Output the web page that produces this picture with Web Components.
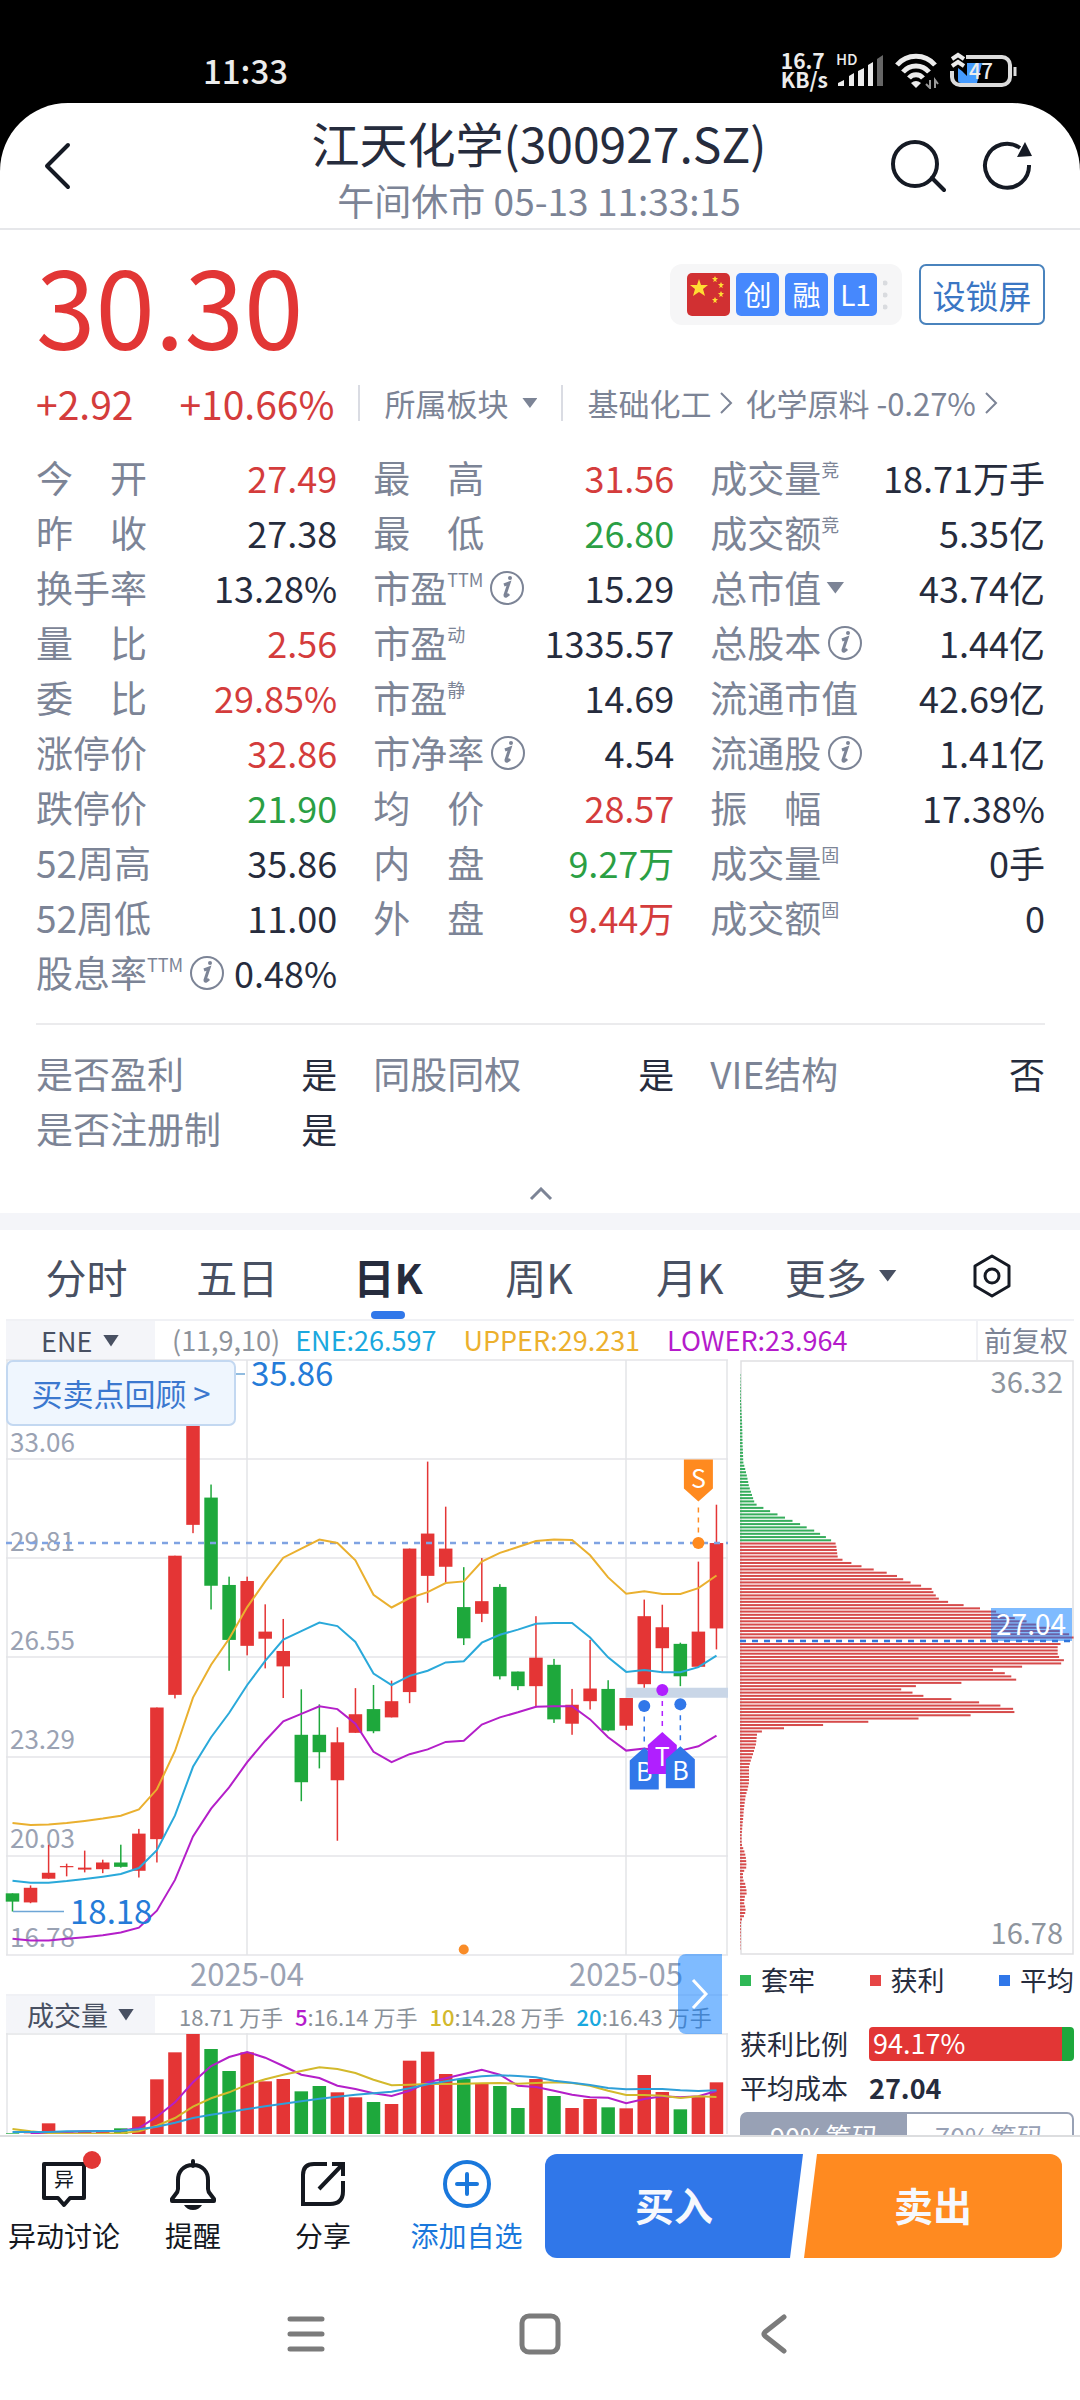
<!DOCTYPE html>
<html lang="zh-CN">
<head>
<meta charset="utf-8">
<meta name="viewport" content="width=device-width, initial-scale=1">
<title>江天化学(300927.SZ)</title>
<style>
  body {
    margin: 0;
    height: 100vh;
    display: flex;
    flex-direction: column;
    overflow: hidden;
    background: #000;
    color: #262c3d;
    font-family: "Noto Sans CJK SC", sans-serif;
    --muted: #7c8496;
    --up: #e23635;
    --down: #1ea83c;
    --blue: #3077e9;
    --panel: #f4f5f9;
    --line: #e6e7ea;
  }

  main {
    flex: 1;
    min-height: 0;
    overflow: hidden;
    background: #fff;
    border-radius: 68px 68px 0 0;
  }
</style>
</head>
<body>
<status-bar></status-bar>
<main>
  <stock-header>
    <span slot="title">江天化学(300927.SZ)</span>
    <span slot="state">午间休市 05-13 11:33:15</span>
  </stock-header>

  <quote-summary>
    <span slot="price">30.30</span>
    <span slot="change">+2.92</span>
    <span slot="percent">+10.66%</span>
  </quote-summary>

  <quote-grid>
    <quote-item value="27.49" tone="up">今　开</quote-item>
    <quote-item value="31.56" tone="up">最　高</quote-item>
    <quote-item value="18.71万手" mark="竞">成交量</quote-item>
    <quote-item value="27.38">昨　收</quote-item>
    <quote-item value="26.80" tone="down">最　低</quote-item>
    <quote-item value="5.35亿" mark="竞">成交额</quote-item>
    <quote-item value="13.28%">换手率</quote-item>
    <quote-item value="15.29" mark="TTM" info>市盈</quote-item>
    <quote-item value="43.74亿" more>总市值</quote-item>
    <quote-item value="2.56" tone="up">量　比</quote-item>
    <quote-item value="1335.57" mark="动">市盈</quote-item>
    <quote-item value="1.44亿" info>总股本</quote-item>
    <quote-item value="29.85%" tone="up">委　比</quote-item>
    <quote-item value="14.69" mark="静">市盈</quote-item>
    <quote-item value="42.69亿">流通市值</quote-item>
    <quote-item value="32.86" tone="up">涨停价</quote-item>
    <quote-item value="4.54" info>市净率</quote-item>
    <quote-item value="1.41亿" info>流通股</quote-item>
    <quote-item value="21.90" tone="down">跌停价</quote-item>
    <quote-item value="28.57" tone="up">均　价</quote-item>
    <quote-item value="17.38%">振　幅</quote-item>
    <quote-item value="35.86">52周高</quote-item>
    <quote-item value="9.27万" tone="down">内　盘</quote-item>
    <quote-item value="0手" mark="固">成交量</quote-item>
    <quote-item value="11.00">52周低</quote-item>
    <quote-item value="9.44万" tone="up">外　盘</quote-item>
    <quote-item value="0" mark="固">成交额</quote-item>
    <quote-item value="0.48%" mark="TTM" info>股息率</quote-item>

    <quote-item slot="extra" value="是">是否盈利</quote-item>
    <quote-item slot="extra" value="是">同股同权</quote-item>
    <quote-item slot="extra" value="否">VIE结构</quote-item>
    <quote-item slot="extra" value="是">是否注册制</quote-item>
  </quote-grid>

  <period-tabs active="日K"></period-tabs>
  <indicator-bar></indicator-bar>

  <chart-layout>
    <kline-chart></kline-chart>
    <volume-chart></volume-chart>
    <chip-panel slot="side"></chip-panel>
  </chart-layout>
</main>
<trade-bar></trade-bar>
<nav-bar></nav-bar>

<script>
// Styles shared by every element
const base = `
  * { box-sizing: border-box; }
  :host { display: block; }
  button, select {
    font: inherit; color: inherit; background: none; border: 0;
    padding: 0; margin: 0; cursor: pointer; white-space: nowrap;
  }
  a { color: inherit; text-decoration: none; }
  svg { display: block; }
  .tri {
    display: inline-block; width: 18px; height: 12px; flex: none;
    background: currentColor; clip-path: polygon(0 0, 100% 0, 50% 100%);
  }
`;

class BaseElement extends HTMLElement {
  constructor() {
    super();
    this.attachShadow({ mode: 'open' });
  }

  connectedCallback() {
    this.shadowRoot.innerHTML = `<style>${base}${this.styles()}</style>${this.markup()}`;
  }

  styles() { return ''; }
  markup() { return ''; }
}

class StatusBar extends BaseElement {
  styles() {
    return `
      :host { height: 103px; flex: none; color: #ececec; background: #000; }
      .row {
        display: flex; align-items: center; justify-content: space-between;
        padding: 36px 62px 0 203px;
      }
      .time { font-size: 33px; line-height: 68px; font-weight: 500; }
      .right { display: flex; align-items: center; gap: 8px; }
      .speed { font-size: 21px; line-height: 19px; font-weight: 700; }
      .speed span { display: block; }
      text { fill: #ececec; font-weight: 500; }
    `;
  }

  markup() {
    return `
      <div class="row">
        <span class="time">11:33</span>
        <div class="right">
          <div class="speed"><span>16.7</span><span>KB/s</span></div>
          <svg width="48" height="38" viewBox="0 0 48 38" fill="#ececec">
            <text x="0" y="14" font-size="15">HD</text>
            <path d="M2 35v-3l6-3v6zM13 35V25l5-3v13zM22 35V20l6-3v18zM32 35V14l5-3v24z"/>
            <path d="M41 35V8l6-4v31z" fill="#666"/>
          </svg>
          <svg width="50" height="38" viewBox="0 0 50 38" fill="none" stroke="#ececec" stroke-width="5">
            <path d="M5 14a25 25 0 0 1 38 0M11 21a17 17 0 0 1 26 0M17 27a9 9 0 0 1 14 0"/>
            <path d="M19 32q5-4 10 0l-5 5z" fill="#ececec" stroke="none"/>
            <path d="M38 29v8l-4-4M43 37v-8l3 4" stroke="#999" stroke-width="2"/>
          </svg>
          <svg width="68" height="38" viewBox="0 0 68 38" fill="none">
            <path d="M8 17v12q0 3 3 3h16l5-20H17v13l-5-5z" fill="#459bff"/>
            <path d="M16 6h36a8 8 0 0 1 8 8v12a8 8 0 0 1-8 8H10a8 8 0 0 1-8-8v-6" stroke="#dcdcdc" stroke-width="4"/>
            <path d="M2 8l6-4 6 4M2 15l6-4 6 4" stroke="#ececec" stroke-width="4"/>
            <path d="M65 16v9" stroke="#dcdcdc" stroke-width="3"/>
            <text x="19" y="28" font-size="21">47</text>
          </svg>
        </div>
      </div>
    `;
  }
}

class StockHeader extends BaseElement {
  styles() {
    return `
      header {
        display: grid; grid-template-columns: 1fr auto 1fr; align-items: center;
        padding: 0 46px 0 36px; border-bottom: 2px solid var(--line); color: #151a24;
      }
      .titles { padding-top: 10px; text-align: center; line-height: 58px; height: 125px; margin-left: 8px; }
      h1 { margin: 0; font-size: 48px; font-weight: 400; line-height: 58px; color: #262c3d; }
      p { margin: 0; font-size: 37px; color: var(--muted); }
      .tools { display: flex; justify-content: flex-end; gap: 36px; }
    `;
  }

  markup() {
    return `
      <header>
        <button aria-label="返回" style="justify-self:start">
          <svg width="44" height="52" viewBox="0 0 44 52" fill="none" stroke="currentColor" stroke-width="4" stroke-linecap="round" stroke-linejoin="round"><path d="M32 5 11 26l21 21"/></svg>
        </button>
        <div class="titles">
          <h1><slot name="title"></slot></h1>
          <p><slot name="state"></slot></p>
        </div>
        <div class="tools">
          <button aria-label="搜索">
            <svg width="56" height="56" viewBox="0 0 56 56" fill="none" stroke="currentColor" stroke-width="4" stroke-linecap="round"><circle cx="25" cy="26" r="22"/><path d="m42 40 12 12"/></svg>
          </button>
          <button aria-label="刷新">
            <svg width="52" height="56" viewBox="0 0 52 56" fill="none" stroke="currentColor" stroke-width="4"><path d="M47 27a22 22 0 1 1-9-17"/><path d="m43 4 7 14-15 1z" fill="currentColor" stroke="none"/></svg>
          </button>
        </div>
      </header>
    `;
  }
}

class QuoteSummary extends BaseElement {
  styles() {
    return `
      :host { padding: 34px 35px 0 36px; }
      .top, .badges, .change { display: flex; align-items: center; }
      .top { align-items: flex-start; gap: 17px; }
      .price { flex: 1; font-size: 107px; line-height: 80px; color: var(--up); }
      ::slotted([slot="price"]) { display: block; }
      .badges { height: 61px; padding: 0 14px 0 17px; gap: 6px; border-radius: 12px; background: #f6f6f7; }
      .badge {
        width: 43px; height: 43px; border-radius: 5px; background: #4688fd;
        color: #fff; font-size: 28px; line-height: 42px; text-align: center;
      }
      .flag { background: #d13032; }
      .lock {
        width: 126px; height: 61px; border: 2px solid #4a83bd; border-radius: 7px;
        color: #3a76c4; font-size: 33px; line-height: 54px;
      }
      .change { margin-top: 41px; height: 36px; line-height: 36px; font-size: 31px; color: var(--muted); white-space: nowrap; }
      .diff { font-size: 39px; color: #d43c3c; }
      .percent { margin-left: 46px; }
      i.bar { width: 2px; height: 36px; margin: 0 24px; background: #dadce3; }
      .sector { display: flex; align-items: center; gap: 14px; }
      .sector .tri { width: 15px; height: 10px; }
      a { display: flex; align-items: center; gap: 8px; margin-right: 12px; }
    `;
  }

  markup() {
    const arrow = '<svg width="14" height="26" viewBox="0 0 14 26" fill="none" stroke="currentColor" stroke-width="2"><path d="m2 3 10 10L2 23"/></svg>';
    return `
      <div class="top">
        <div class="price"><slot name="price"></slot></div>
        <div class="badges">
          <svg class="badge flag" viewBox="0 0 43 43" fill="#fd3">
            <path d="m12 6 2 6h7l-5 4 2 7-6-4-6 4 2-7-5-4h7z"/>
            <path d="m28 3 1 2h2l-2 2 1 2-2-1-2 1 1-2-2-2h2zM34 9l1 2h2l-2 2 1 2-2-1-2 1 1-2-2-2h2zM34 18l1 2h2l-2 2 1 2-2-1-2 1 1-2-2-2h2zM28 24l1 2h2l-2 2 1 2-2-1-2 1 1-2-2-2h2z"/>
          </svg>
          <span class="badge">创</span>
          <span class="badge">融</span>
          <span class="badge">L1</span>
          <svg width="5" height="36" viewBox="0 0 5 36" fill="#d9dbdf"><circle cx="2" cy="6" r="2.5"/><circle cx="2" cy="18" r="2.5"/><circle cx="2" cy="30" r="2.5"/></svg>
        </div>
        <button class="lock">设锁屏</button>
      </div>
      <div class="change">
        <span class="diff"><slot name="change"></slot></span>
        <span class="diff percent"><slot name="percent"></slot></span>
        <i class="bar"></i>
        <button class="sector">所属板块<i class="tri"></i></button>
        <i class="bar"></i>
        <a href="#industry">基础化工${arrow}</a>
        <a href="#material">化学原料 -0.27%${arrow}</a>
      </div>
    `;
  }
}

class QuoteGrid extends BaseElement {
  styles() {
    return `
      :host { padding: 29px 35px 0 36px; }
      .grid { display: grid; grid-template-columns: 9fr 9fr 10fr; grid-auto-rows: 55px; column-gap: 36px; }
      .extra { margin-top: 23px; padding-top: 21px; border-top: 2px solid #ebebed; }
      .fold { display: flex; width: 100%; height: 57px; padding-top: 31px; justify-content: center; color: var(--muted); }
      .band { height: 17px; margin: 0 -36px; background: var(--panel); }
    `;
  }

  markup() {
    return `
      <div class="grid"><slot></slot></div>
      <div class="grid extra"><slot name="extra"></slot></div>
      <button class="fold" aria-label="收起">
        <svg width="24" height="14" viewBox="0 0 24 14" fill="none" stroke="currentColor" stroke-width="3"><path d="m2 12 10-10 10 10"/></svg>
      </button>
      <div class="band"></div>
    `;
  }
}

class QuoteItem extends BaseElement {
  styles() {
    const tones = { up: '#d43c3c', down: '#2b9f44' };
    const color = tones[this.getAttribute('tone')] || '#262c3d';
    return `
      :host {
        display: flex; justify-content: space-between; align-items: center;
        font-size: 37px; line-height: 55px; white-space: nowrap; min-width: 0;
      }
      .label { display: flex; align-items: center; color: var(--muted); }
      .mark { align-self: flex-start; font-size: 18px; line-height: 38px; }
      .info { margin-left: 6px; }
      .tri { margin-left: 5px; }
      .value { color: ${color}; font-size: 36px; }
    `;
  }

  markup() {
    const mark = this.getAttribute('mark');
    return `
      <span class="label">
        <slot></slot>
        ${mark ? `<span class="mark">${mark}</span>` : ''}
        ${this.hasAttribute('info') ? `
          <svg class="info" width="36" height="36" viewBox="0 0 36 36" fill="none" stroke="currentColor" stroke-width="2">
            <circle cx="18" cy="18" r="16"/>
            <path d="M15 15l5-2-4 12q0 3 4-1" stroke-width="3"/><circle cx="21" cy="8" r="2" fill="currentColor" stroke="none"/>
          </svg>` : ''}
        ${this.hasAttribute('more') ? '<i class="tri"></i>' : ''}
      </span>
      <span class="value">${this.getAttribute('value')}</span>
    `;
  }
}

class PeriodTabs extends BaseElement {
  styles() {
    return `
      nav { display: grid; grid-template-columns: repeat(7, 1fr); height: 89px; padding: 0 13px 0 11px; }
      button {
        position: relative; display: flex; align-items: center; justify-content: center; gap: 12px;
        padding-top: 2px; font-size: 41px; color: #485062;
      }
      .active { font-weight: 700; color: #262c3d; }
      .active::after {
        content: ""; position: absolute; bottom: 0; left: calc(50% - 17px);
        width: 34px; height: 8px; border-radius: 4px; background: var(--blue);
      }
    `;
  }

  markup() {
    const active = this.getAttribute('active');
    const tabs = ['分时', '五日', '日K', '周K', '月K'];
    return `
      <nav>
        ${tabs.map(t => `<button class="${t === active ? 'active' : ''}">${t}</button>`).join('')}
        <button>更多<i class="tri"></i></button>
        <button aria-label="设置">
          <svg width="42" height="46" viewBox="0 0 42 46" fill="none" stroke="#151a24" stroke-width="3" stroke-linejoin="round">
            <path d="M21 3 38 13v20L21 43 4 33V13z"/><circle cx="21" cy="23" r="7"/>
          </svg>
        </button>
      </nav>
    `;
  }
}

// Grey drop-down that opens both the indicator and the volume row
const pickerStyles = `
  .picker { position: relative; display: flex; align-items: center; width: 149px; background: var(--panel); color: #485062; }
  .picker select { appearance: none; width: 100%; height: 100%; font-size: 27px; line-height: 38px; outline: 0; }
  .picker .tri { position: absolute; width: 16px; pointer-events: none; }
`;

class IndicatorBar extends BaseElement {
  styles() {
    return `${pickerStyles}
      .bar {
        display: flex; height: 41px; margin: 0 6px; border-top: 2px solid #f0f1f5;
        font-size: 27px; line-height: 37px; white-space: nowrap;
      }
      .picker select { padding-left: 35px; }
      .picker .tri { left: 97px; }
      .params { padding: 0 15px 0 17px; color: #8e939b; }
      .values { flex: 1; display: flex; gap: 27px; }
      .adjust { padding: 0 6px; border-left: 2px solid #f0f1f5; font-size: 28px; color: var(--muted); }
    `;
  }

  markup() {
    return `
      <div class="bar">
        <label class="picker"><select aria-label="主图指标"><option>ENE</option></select><i class="tri"></i></label>
        <span class="params">(11,9,10)</span>
        <div class="values">
          <span style="color:#1ba8de">ENE:26.597</span>
          <span style="color:#ecb02d">UPPER:29.231</span>
          <span style="color:#b51bcb">LOWER:23.964</span>
        </div>
        <button class="adjust">前复权</button>
      </div>
    `;
  }
}

class ChartLayout extends BaseElement {
  styles() {
    return `
      :host { display: grid; grid-template-columns: 722fr 334fr; gap: 12px; padding: 0 6px; align-items: start; }
    `;
  }

  markup() {
    return '<div><slot></slot></div><slot name="side"></slot>';
  }
}

const COUNT = 40;
const STEP = 18.05;
const barX = i => 6.5 + i * STEP;
const levelToY = level => (level - 26) * 595 / 1505;
const polyline = (values, toY, color) => {
  const points = values.slice(0, COUNT)
    .map((v, i) => v === null ? '' : `${barX(i).toFixed(1)},${toY(v).toFixed(1)}`).join(' ');
  return `<polyline points="${points}" fill="none" stroke="${color}" stroke-width="2"/>`;
};
const toneColor = tone => tone === 'g' ? '#1ea83c' : '#e43535';

// tone, body top, body bottom, high, low
const candles = [
  ['g', 1375, 1396, 1375, 1421], ['r', 1361, 1398, 1355, 1400], ['r', 1323, 1338, 1252, 1338], ['r', 1306, 1309, 1300, 1332],
  ['r', 1310, 1315, 1267, 1322], ['r', 1297, 1314, 1290, 1324], ['g', 1297, 1308, 1252, 1310], ['r', 1224, 1318, 1212, 1335],
  ['r', 905, 1238, 905, 1297], ['r', 521, 873, 521, 882], ['r', 140, 443, 60, 464], ['g', 374, 597, 341, 657],
  ['g', 595, 734, 574, 812], ['r', 585, 749, 574, 773], ['r', 713, 731, 644, 806], ['r', 762, 801, 681, 881],
  ['g', 974, 1094, 859, 1142], ['g', 974, 1018, 897, 1059], ['r', 993, 1089, 955, 1242], ['r', 922, 969, 856, 969],
  ['g', 909, 965, 848, 970], ['r', 889, 930, 837, 930], ['r', 503, 866, 503, 894], ['r', 465, 572, 283, 640],
  ['r', 503, 549, 397, 590], ['g', 651, 730, 550, 747], ['r', 636, 668, 527, 689], ['g', 600, 826, 593, 834],
  ['g', 814, 851, 814, 861], ['r', 779, 851, 674, 905], ['g', 797, 935, 782, 944], ['r', 898, 946, 858, 974],
  ['r', 857, 889, 734, 910], ['g', 858, 963, 836, 965], ['r', 881, 951, 881, 962], ['r', 674, 846, 632, 855],
  ['r', 702, 755, 645, 815], ['g', 744, 826, 741, 851], ['r', 713, 802, 536, 802], ['r', 489, 705, 392, 758]
];

const upper = [1197, 1202, 1201, 1197, 1192, 1186, 1179, 1163, 1112, 1015, 880, 797, 731, 651, 586, 526, 503, 480, 489, 533,
  620, 652, 628, 613, 590, 586, 536, 514, 499, 484, 480, 481, 520, 576, 617, 611, 618, 618, 603, 571];
const middle = [1343, 1348, 1348, 1344, 1339, 1333, 1326, 1311, 1266, 1178, 1055, 980, 919, 848, 787, 733, 712, 690, 699, 739,
  819, 848, 825, 812, 791, 788, 741, 721, 708, 693, 691, 691, 728, 778, 815, 810, 816, 816, 803, 774];
const lower = [1490, 1494, 1494, 1490, 1486, 1481, 1474, 1462, 1419, 1341, 1231, 1161, 1107, 1043, 989, 940, 921, 902, 909, 946,
  1017, 1043, 1023, 1011, 992, 989, 948, 930, 917, 903, 902, 902, 935, 980, 1014, 1009, 1016, 1014, 1003, 976];

class KlineChart extends BaseElement {
  styles() {
    return `
      :host { position: relative; }
      svg { width: 100%; height: auto; overflow: visible; }
      .axis text { font-size: 26px; fill: #9aa2b3; }
      .peak { font-size: 33px; fill: #247bd8; }
      .date { font-size: 31px; fill: #9aa2b3; text-anchor: middle; }
      .flag text { font-size: 25px; fill: #fff; text-anchor: middle; }
      .review {
        position: absolute; top: 0; left: 0; width: 230px; height: 66px; text-align: center;
        border: 2px solid #c3d8f1; border-radius: 7px; background: #eff6fe;
        color: #3b78cf; font-size: 31px; line-height: 60px;
      }
    `;
  }

  candle([tone, top, bottom, high, low], i) {
    const x = barX(i);
    const y = levelToY(top);
    return `<g fill="${toneColor(tone)}">
      <rect x="${x - 0.75}" y="${levelToY(high)}" width="1.5" height="${levelToY(low) - levelToY(high)}"/>
      <rect x="${x - 6.75}" y="${y}" width="13.5" height="${levelToY(bottom) - y}"/>
    </g>`;
  }

  // A trade flag tied to its dot by a dashed stem
  flag(letter, i, tip, dot, color, down) {
    const x = barX(i);
    const y = levelToY(tip);
    const d = levelToY(dot);
    const s = down ? -1 : 1;
    return `<g class="flag" fill="${color}">
      <path d="M${x} ${y - s * 6}V${d}" stroke="${color}" stroke-width="1.5" stroke-dasharray="5 5"/>
      <circle cx="${x}" cy="${d}" r="6"/>
      <path d="M${x} ${y}l14.5 ${s * 13}v${s * 29}h-29v${-s * 29}z"/>
      <text x="${x}" y="${down ? y - 14 : y + 34}">${letter}</text>
    </g>`;
  }

  markup() {
    const prices = ['33.06', '29.81', '26.55', '23.29', '20.03', '16.78'];
    const rows = [0, 99, 198, 297, 397, 496, 595];
    return `
      <svg viewBox="0 0 722 634">
        <g stroke="#e4e5e8" stroke-width="1.5" fill="none">
          ${rows.map(y => `<path d="M0 ${y}H722"/>`).join('')}
          <path d="M1 0V595M241 0V595M620 0V595M721 0V595"/>
        </g>
        <rect x="620" y="${levelToY(855)}" width="102" height="10" fill="#c9d6e7"/>
        <g class="axis">
          ${prices.map((p, i) => `<text x="4" y="${(i + 1) * 99 - 7}">${p}</text>`).join('')}
        </g>
        ${candles.map((c, i) => this.candle(c, i)).join('')}
        <path d="M0 ${levelToY(489)}H722" stroke="#7fa3e2" stroke-width="2.5" stroke-dasharray="6 6"/>
        ${polyline(upper, levelToY, '#eab02f')}
        ${polyline(middle, levelToY, '#2aa9da')}
        ${polyline(lower, levelToY, '#b41fc9')}
        <path d="M229 14H239M7 ${levelToY(1421)}H58" stroke="#6ea6d6" stroke-width="1.5"/>
        <text class="peak" x="245" y="26">35.86</text>
        <text class="peak" x="64" y="564">18.18</text>
        ${this.flag('B', 35, 1006, 901, '#3177e9')}
        ${this.flag('T', 36, 967, 861, '#b01fff')}
        ${this.flag('B', 37, 1003, 897, '#3177e9')}
        ${this.flag('S', 38, 384, 489, '#ff8a1f', true)}
        <circle cx="${barX(25)}" cy="${levelToY(1517)}" r="5" fill="#f98c28"/>
        <text class="date" x="241" y="626">2025-04</text>
        <text class="date" x="620" y="626">2025-05</text>
      </svg>
      <button class="review">买卖点回顾 &gt;</button>
    `;
  }
}

// tone, bar top
const volumes = [
  ['g', 583], ['r', 584], ['r', 553], ['r', 580], ['r', 577], ['r', 575], ['g', 568], ['r', 532], ['r', 421], ['r', 340],
  ['r', 285], ['g', 330], ['g', 396], ['r', 340], ['r', 427], ['r', 420], ['g', 457], ['g', 441], ['r', 460], ['r', 475],
  ['g', 489], ['r', 495], ['r', 365], ['r', 338], ['r', 405], ['g', 420], ['r', 432], ['g', 441], ['g', 507], ['r', 420],
  ['g', 471], ['r', 507], ['r', 480], ['g', 505], ['r', 508], ['r', 408], ['r', 459], ['g', 511], ['r', 473], ['r', 430]
];
const ma5 = [null, 584, 581, 579, 577, 577, 575, 567, 533, 490, 430, 381, 354, 339, 356, 381, 407, 417, 440, 450,
  463, 471, 455, 430, 418, 405, 392, 407, 440, 444, 455, 467, 475, 476, 493, 480, 472, 475, 472, 456];
const ma10 = [570, 577, 582, 584, 584, 584, 583, 577, 560, 537, 503, 478, 460, 437, 421, 407, 396, 385, 390, 402,
  422, 439, 437, 435, 435, 434, 433, 432, 434, 432, 430, 432, 440, 455, 468, 468, 470, 477, 472, 474];
const ma20 = [579, 579, 579, 577, 577, 576, 575, 571, 563, 551, 537, 527, 519, 510, 502, 494, 487, 479, 473, 467,
  463, 458, 448, 436, 427, 418, 412, 409, 411, 415, 425, 431, 438, 447, 451, 450, 450, 454, 456, 454];

class VolumeChart extends BaseElement {
  styles() {
    return `${pickerStyles}
      :host { position: relative; }
      .bar { display: flex; height: 39px; border-top: 2px solid #f0f1f5; }
      .picker select { padding-left: 21px; }
      .picker .tri { left: 112px; }
      .values {
        flex: 1; display: flex; align-items: center; gap: 12px; padding-left: 24px;
        font-size: 22px; line-height: 40px; padding-top: 3px; color: #8a9199; white-space: nowrap;
      }
      svg.plot { width: 100%; height: auto; }
      .more {
        position: absolute; right: 6px; top: -40px; width: 44px; height: 80px;
        display: flex; align-items: center; justify-content: center;
        border-radius: 8px 0 0 8px; background: rgba(0, 120, 255, 0.5);
      }
    `;
  }

  markup() {
    const toY = v => (v - 282) / 3;
    return `
      <div class="bar">
        <label class="picker"><select aria-label="副图指标"><option>成交量</option></select><i class="tri"></i></label>
        <div class="values">
          <span>18.71 万手</span>
          <span><b style="color:#b51bcb;font-weight:500">5</b>:16.14 万手</span>
          <span><b style="color:#d3b92c;font-weight:500">10</b>:14.28 万手</span>
          <span><b style="color:#1ba8de;font-weight:500">20</b>:16.43 万手</span>
        </div>
      </div>
      <svg class="plot" viewBox="0 0 722 101">
        <path d="M0 1H722M1 0V101M241 0V101M620 0V101M721 0V101" stroke="#e4e5e8" stroke-width="1.5"/>
        ${volumes.map(([tone, top], i) =>
          `<rect x="${barX(i) - 6.75}" y="${toY(top)}" width="13.5" height="${101 - toY(top)}" fill="${toneColor(tone)}"/>`).join('')}
        ${polyline(ma5, toY, '#b41fc9')}
        ${polyline(ma10, toY, '#d3b92c')}
        ${polyline(ma20, toY, '#2f9fd8')}
      </svg>
      <button class="more" aria-label="展开">
        <svg width="20" height="34" viewBox="0 0 20 34" fill="none" stroke="#fff" stroke-width="3"><path d="m3 3 13 14L3 31"/></svg>
      </button>
    `;
  }
}

// Outline of the cost distribution: level, length
const chips = [
  [57, 1], [130, 3], [180, 6], [240, 8], [285, 10], [300, 15], [320, 21], [345, 27], [370, 37], [390, 45], [400, 70],
  [409, 92], [417, 114], [425, 136], [433, 158], [441, 180], [450, 202], [458, 224], [466, 241], [474, 258], [483, 275],
  [491, 288], [523, 293], [532, 309], [540, 336], [548, 366], [556, 402], [564, 440], [573, 474], [581, 491], [589, 513],
  [597, 544], [605, 575], [613, 580], [622, 588], [630, 597], [638, 625], [646, 671], [654, 719], [662, 767], [670, 795],
  [679, 825], [687, 860], [695, 895], [703, 930], [711, 960], [720, 988], [728, 1001], [744, 962], [752, 953], [769, 953],
  [777, 957], [785, 972], [794, 963], [801, 854], [810, 758], [818, 794], [826, 813], [834, 839], [842, 677], [850, 534],
  [858, 479], [866, 513], [875, 545], [883, 627], [891, 710], [899, 776], [908, 819], [916, 831], [924, 705], [932, 552],
  [940, 403], [948, 268], [957, 136], [965, 67], [973, 51], [998, 48], [1015, 42], [1038, 33], [1054, 27], [1095, 27],
  [1112, 23], [1128, 17], [1160, 12], [1200, 8], [1225, 5], [1250, 5], [1266, 12], [1280, 17], [1308, 20], [1316, 14],
  [1324, 9], [1340, 9], [1349, 15], [1374, 21], [1382, 15], [1398, 12], [1414, 17], [1430, 15], [1438, 7], [1450, 3], [1520, 1]
];

class ChipPanel extends BaseElement {
  styles() {
    return `
      :host { font-size: 27px; }
      svg { width: 100%; height: auto; }
      text { font-size: 29px; fill: #8e959e; text-anchor: end; }
      .legend { display: flex; justify-content: space-between; line-height: 50px; }
      .legend span { display: flex; align-items: center; gap: 10px; }
      .legend i { width: 11px; height: 11px; }
      dl {
        display: grid; grid-template-columns: 129px 1fr; align-items: center;
        margin: 17px 0 0; line-height: 44px; white-space: nowrap;
      }
      dd { margin: 0; font-weight: 700; }
      .ratio {
        height: 34px; padding-left: 4px; border-radius: 4px; line-height: 32px; font-weight: 400; color: #fff;
        background: linear-gradient(90deg, var(--up) 94%, var(--down) 94%);
      }
      .ranges { display: flex; margin-top: 2px; height: 50px; border: 2px solid #98a1b5; border-radius: 7px; }
      .ranges button { flex: 1; line-height: 42px; color: #98a1b5; }
      .ranges .on { background: #98a1b5; color: #fff; }
    `;
  }

  lengthAt(level) {
    const next = chips.findIndex(c => c[0] >= level);
    if (next < 1) return 1;
    const [l0, v0] = chips[next - 1];
    const [l1, v1] = chips[next];
    return v0 + (v1 - v0) * (level - l0) / (l1 - l0);
  }

  bars() {
    let out = '';
    for (let level = 64; level < 1520; level += 8.197) {
      if (Math.abs(level - 736) < 4) continue;
      const color = level < 487 ? '#36ad5c' : '#d64b4b';
      out += `<rect x="0" y="${(levelToY(level) - 1).toFixed(2)}" width="${(this.lengthAt(level) / 3).toFixed(1)}" height="2" fill="${color}"/>`;
    }
    return out;
  }

  markup() {
    return `
      <svg viewBox="0 0 334 595">
        <path d="M1 1H333V594H1z" fill="none" stroke="#dfe0e2" stroke-width="1.5"/>
        ${this.bars()}
        <rect x="251" y="248" width="81" height="33" fill="#0078ff" fill-opacity="0.5"/>
        <path d="M0 281H334" stroke="#2f76dc" stroke-width="2.5" stroke-dasharray="6 6"/>
        <text x="323" y="33">36.32</text>
        <text x="323" y="584">16.78</text>
        <text x="326" y="275" style="fill:#fff;font-size:28px">27.04</text>
      </svg>
      <div class="legend">
        <span><i style="background:#2fb856"></i>套牢</span>
        <span><i style="background:#e64545"></i>获利</span>
        <span><i style="background:#3077e9"></i>平均</span>
      </div>
      <dl>
        <dt>获利比例</dt><dd class="ratio">94.17%</dd>
        <dt>平均成本</dt><dd>27.04</dd>
      </dl>
      <div class="ranges"><button class="on">90%筹码</button><button>70%筹码</button></div>
    `;
  }
}

class TradeBar extends BaseElement {
  styles() {
    return `
      :host { position: relative; flex: none; background: #fff; border-top: 2px solid #dcdddf; color: #14181f; }
      .bar { display: grid; grid-template-columns: 128fr 130fr 130fr 157fr 517fr; padding-right: 18px; height: 121px; }
      .tool { display: flex; flex-direction: column; align-items: center; padding-top: 19px; font-size: 28px; line-height: 40px; gap: 5px; }
      .add { color: #1a78dc; }
      .trade { display: grid; grid-template-columns: 1fr 1fr; gap: 1px; padding-top: 17px; }
      .trade button { height: 104px; padding-bottom: 4px; color: #f6f8fd; font-size: 39px; font-weight: 700; }
      .buy { border-radius: 12px 0 0 12px; background: var(--blue); clip-path: polygon(0 0, 100% 0, calc(100% - 13px) 100%, 0 100%); }
      .sell { border-radius: 0 12px 12px 0; background: #ff8a20; clip-path: polygon(13px 0, 100% 0, 100% 100%, 0 100%); }
      svg { overflow: visible; }
      text { font-size: 20px; fill: currentColor; stroke: none; }
    `;
  }

  markup() {
    const icon = body => `<svg width="50" height="54" viewBox="0 0 50 54" fill="none" stroke="currentColor" stroke-width="4">${body}</svg>`;
    return `
      <div class="bar">
        <button class="tool">${icon('<path d="M5 8h40v34H31l-6 7-6-7H5z" stroke-linejoin="round"/><text x="15" y="31">异</text><circle cx="53" cy="4" r="9" fill="#e23635" stroke="none"/>')}异动讨论</button>
        <button class="tool">${icon('<path d="M25 5v5M25 9c-10 0-15 7-15 15v9q0 3-3 6l-3 4v2h42v-2l-3-4q-3-3-3-6v-9c0-8-5-15-15-15z" stroke-linecap="round" stroke-linejoin="round"/><path d="M16 49h18q-3 5-9 5t-9-5z" fill="currentColor" stroke="none"/>')}提醒</button>
        <button class="tool">${icon('<path d="M29 8H16Q5 8 5 19v29h27q13 0 13-13V25M34 8h11v12M44 9 21 33"/>')}分享</button>
        <button class="tool add">${icon('<circle cx="25" cy="28" r="22"/><path d="M25 18v20M15 28h20" stroke-linecap="round"/>')}添加自选</button>
        <div class="trade"><button class="buy">买入</button><button class="sell">卖出</button></div>
      </div>
    `;
  }
}

class NavBar extends BaseElement {
  styles() {
    return `
      :host { flex: none; background: #fff; }
      nav { display: flex; justify-content: center; height: 142px; padding-top: 10px; }
      button { width: 234px; display: flex; align-items: center; justify-content: center; }
    `;
  }

  markup() {
    const icon = body => `<svg width="44" height="44" viewBox="0 0 44 44" fill="none" stroke="#7b7b7b" stroke-width="5" stroke-linecap="round" stroke-linejoin="round">${body}</svg>`;
    return `
      <nav>
        <button aria-label="最近任务">${icon('<path d="M6 7h32M6 22h32M6 37h32"/>')}</button>
        <button aria-label="主屏幕">${icon('<rect x="4" y="4" width="36" height="36" rx="7"/>')}</button>
        <button aria-label="返回">${icon('<path d="M32 5 13 20q-2 2 0 4l19 15"/>')}</button>
      </nav>
    `;
  }
}

customElements.define('status-bar', StatusBar);
customElements.define('stock-header', StockHeader);
customElements.define('quote-summary', QuoteSummary);
customElements.define('quote-grid', QuoteGrid);
customElements.define('quote-item', QuoteItem);
customElements.define('period-tabs', PeriodTabs);
customElements.define('indicator-bar', IndicatorBar);
customElements.define('chart-layout', ChartLayout);
customElements.define('kline-chart', KlineChart);
customElements.define('volume-chart', VolumeChart);
customElements.define('chip-panel', ChipPanel);
customElements.define('trade-bar', TradeBar);
customElements.define('nav-bar', NavBar);
</script>
</body>
</html>
